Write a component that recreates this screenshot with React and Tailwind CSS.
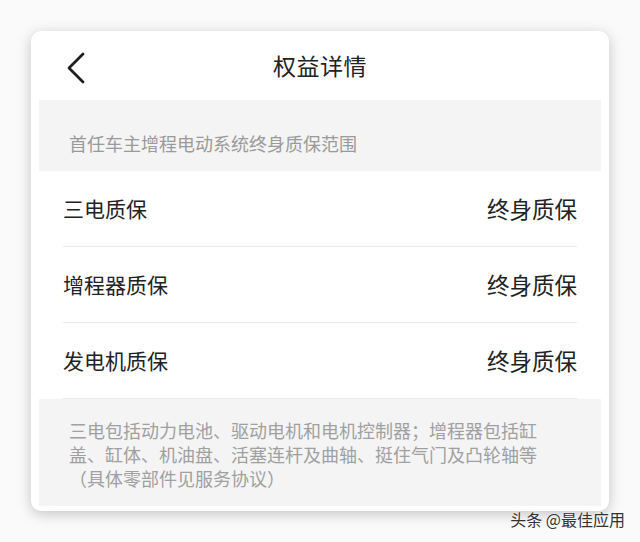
import React from 'react';

const FONT = { fontFamily: '"Noto Sans CJK SC", "Noto Sans", sans-serif' };

const rows = [
  { label: '三电质保', value: '终身质保' },
  { label: '增程器质保', value: '终身质保' },
  { label: '发电机质保', value: '终身质保' },
];

function BackIcon() {
  return (
    <svg width="20" height="32" viewBox="0 0 20 32" fill="none">
      <path d="M17 2 L3 16 L17 30" stroke="#1f1f1f" strokeWidth="2.8" strokeLinecap="round" strokeLinejoin="round" />
    </svg>
  );
}

export default function App() {
  return (
    <div className="relative w-[640px] h-[542px] bg-[#fafafa] pt-[31px] pl-[31px]" style={FONT}>
      <div className="w-[578px] h-[480px] bg-white rounded-[10px] shadow-[0_3px_14px_rgba(0,0,0,0.22)] px-[8px] flex flex-col">
        {/* Header */}
        <div className="relative h-[69px] flex items-center justify-center">
          <div className="absolute left-[27px] top-[21px]">
            <BackIcon />
          </div>
          <h1 className="text-[23px] text-[#222] tracking-[0.5px]">权益详情</h1>
        </div>

        {/* Intro band */}
        <div className="h-[71px] bg-[#f4f4f4] pl-[30px] pt-[30px]">
          <p className="text-[18px] leading-[26px] text-[#9a9a9a]">首任车主增程电动系统终身质保范围</p>
        </div>

        {/* Rows */}
        <div className="px-[24px]">
          {rows.map((r) => (
            <div key={r.label} className="h-[76px] flex items-center justify-between border-b border-[#ebebeb]">
              <span className="text-[21px] text-[#222]">{r.label}</span>
              <span className="text-[22.5px] text-[#222]">{r.value}</span>
            </div>
          ))}
        </div>

        {/* Notes band */}
        <div className="h-[107px] bg-[#f4f4f4] pl-[30px] pt-[19px]">
          <p className="text-[18px] leading-[24px] text-[#a0a0a0]">
            三电包括动力电池、驱动电机和电机控制器；增程器包括缸<br />
            盖、缸体、机油盘、活塞连杆及曲轴、挺住气门及凸轮轴等<br />
            （具体零部件见服务协议）
          </p>
        </div>
      </div>

      {/* Watermark */}
      <div className="absolute right-[15px] top-[507px] text-[16px] text-[#333] [text-shadow:0_0_2px_#fff]">
        头条 @最佳应用
      </div>
    </div>
  );
}
